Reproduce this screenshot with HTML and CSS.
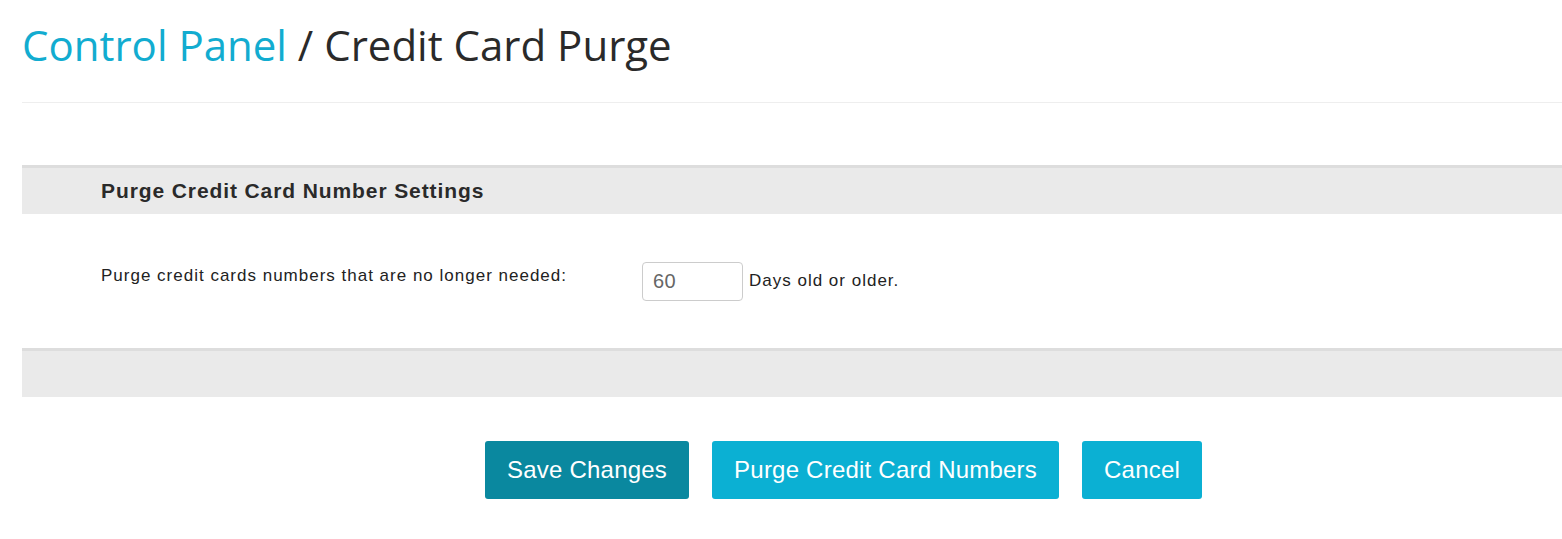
FILE: index.html
```html
<!DOCTYPE html>
<html>
<head>
<meta charset="utf-8">
<link rel="stylesheet" href="styles.css">
</head>
<body>
<div class="page">
  <h1 class="title"><a class="crumb" href="#">Control Panel</a> / Credit Card Purge</h1>
  <div class="rule"></div>
  <div class="panel-head">
    <h2 class="panel-title">Purge Credit Card Number Settings</h2>
  </div>
  <div class="panel-body">
    <label class="field-label" for="days">Purge credit cards numbers that are no longer needed:</label>
    <input class="days-input" id="days" type="text" value="60">
    <span class="suffix">Days old or older.</span>
  </div>
  <div class="panel-foot"></div>
  <div class="actions">
    <button class="btn btn-dark">Save Changes</button>
    <button class="btn btn-light">Purge Credit Card Numbers</button>
    <button class="btn btn-light">Cancel</button>
  </div>
</div>
</body>
</html>
```
FILE: styles.css
```css
html, body {
  margin: 0;
  padding: 0;
  background: #ffffff;
}
.page {
  padding-left: 22px;
  font-family: "Liberation Sans", Arial, sans-serif;
  color: #222;
}
.title {
  margin: 0;
  padding-top: 17px;
  height: 56px;
  font-family: "Open Sans", sans-serif;
  font-weight: 400;
  font-size: 42px;
  line-height: 56px;
  color: #2a2a2a;
}
.crumb {
  color: #12acd0;
  text-decoration: none;
}
.rule {
  margin-top: 29px;
  height: 1px;
  background: #eeeeee;
}
.panel-head {
  margin-top: 62px;
  border-top: 3px solid #dddddd;
  background: #eaeaea;
  height: 46px;
  display: flex;
  align-items: center;
  padding-left: 79px;
}
.panel-title {
  margin: 0;
  font-size: 21px;
  letter-spacing: 0.9px;
  font-weight: 700;
  color: #2a2a2a;
}
.panel-body {
  height: 134px;
  display: flex;
  align-items: center;
  padding-left: 79px;
  font-size: 17px;
  letter-spacing: 1px;
}
.field-label {
  width: 541px;
  margin-top: -10px;
  color: #222;
}
.days-input {
  box-sizing: border-box;
  width: 101px;
  height: 39px;
  border: 1px solid #cccccc;
  border-radius: 4px;
  padding: 0 10px;
  font-family: "Liberation Sans", Arial, sans-serif;
  font-size: 20px;
  letter-spacing: 0.5px;
  color: #666;
  margin-left: 0;
}
.suffix {
  margin-left: 6px;
  color: #222;
}
.panel-foot {
  border-top: 3px solid #dddddd;
  background: #eaeaea;
  height: 46px;
}
.actions {
  margin-top: 44px;
  padding-left: 463px;
  display: flex;
  gap: 23px;
}
.btn {
  height: 58px;
  border: none;
  border-radius: 3px;
  padding: 0 22px;
  font-family: "Liberation Sans", Arial, sans-serif;
  font-size: 24px;
  letter-spacing: 0.22px;
  color: #ffffff;
  cursor: pointer;
}
.btn-dark {
  background: #0a889f;
}
.btn-light {
  background: #0bb0d3;
}
```
